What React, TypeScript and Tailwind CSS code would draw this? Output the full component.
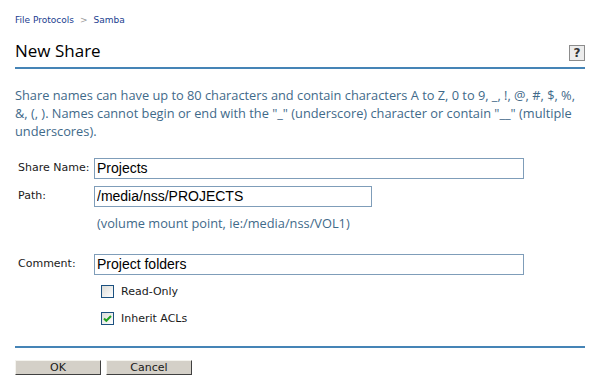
import { useState } from "react";

function Checkbox({ checked, label, onToggle }: { checked: boolean; label: string; onToggle: () => void }) {
  return (
    <label className="flex items-center gap-[7px] h-[13px] cursor-pointer" onClick={onToggle}>
      <span className="w-[13px] h-[13px] border border-[#1c5180] bg-gradient-to-br from-[#dcdcd7] to-[#ffffff] flex items-center justify-center">
        {checked && (
          <svg width="9" height="9" viewBox="0 0 9 9">
            <path d="M1 4.5 L3.3 6.8 L8 2" stroke="#21a121" strokeWidth="2" fill="none" />
          </svg>
        )}
      </span>
      <span className="text-[11px] leading-[13px] text-[#1a1a1a]">{label}</span>
    </label>
  );
}

export default function App() {
  const [shareName, setShareName] = useState("Projects");
  const [path, setPath] = useState("/media/nss/PROJECTS");
  const [comment, setComment] = useState("Project folders");
  const [readOnly, setReadOnly] = useState(false);
  const [inheritAcls, setInheritAcls] = useState(true);

  const inputClass =
    "h-[21px] border border-[#7f9db9] px-[2px] text-[14px] text-black outline-none font-['Liberation_Sans',Arial,sans-serif]";

  return (
    <div className="w-[600px] h-[389px] bg-white px-[15px] pt-[13px] font-['DejaVu_Sans',Verdana,sans-serif]">
      {/* breadcrumb */}
      <div className="text-[9px] leading-[14px] text-[#1a3d8f] flex gap-[6px]">
        <a href="#">File Protocols</a>
        <span className="text-[#9a9a9a]">&gt;</span>
        <a href="#">Samba</a>
      </div>

      {/* title */}
      <div className="mt-[14px] flex items-end justify-between border-b-2 border-[#4584b6] pb-[6px]">
        <h1 className="text-[17px] leading-[20px] text-black font-['Open_Sans',sans-serif]">New Share</h1>
        <button className="w-[16px] h-[16px] border border-[#8c8c8c] bg-[#ececec] flex items-center justify-center text-[12px] font-bold text-[#333] leading-none">
          ?
        </button>
      </div>

      {/* description */}
      <p className="mt-[17px] text-[12.8px] leading-[18px] text-[#3f6a8a] font-['Open_Sans',sans-serif]">
        Share names can have up to 80 characters and contain characters A to Z, 0 to 9, _, !, @, #, $, %,
        &amp;, (, ). Names cannot begin or end with the "_" (underscore) character or contain "__" (multiple
        underscores).
      </p>

      {/* form */}
      <div className="mt-[18px] flex flex-col">
        <div className="flex items-center">
          <span className="w-[79px] pl-[3px] text-[11px] text-[#1a1a1a]">Share Name:</span>
          <input className={`${inputClass} w-[430px]`} value={shareName} onChange={(e) => setShareName(e.target.value)} />
        </div>
        <div className="mt-[7px] flex items-center">
          <span className="w-[79px] pl-[3px] text-[11px] text-[#1a1a1a]">Path:</span>
          <input className={`${inputClass} w-[278px]`} value={path} onChange={(e) => setPath(e.target.value)} />
        </div>
        <div className="mt-[7px] pl-[82px] text-[12.8px] leading-[18px] text-[#3f6a8a] font-['Open_Sans',sans-serif]">
          (volume mount point, ie:/media/nss/VOL1)
        </div>
        <div className="mt-[22px] flex items-center">
          <span className="w-[79px] pl-[3px] text-[11px] text-[#1a1a1a]">Comment:</span>
          <input
            autoFocus
            className={`${inputClass} w-[430px] caret-black`}
            value={comment}
            onChange={(e) => setComment(e.target.value)}
          />
        </div>
        <div className="mt-[10px] pl-[86px] flex flex-col gap-[14px]">
          <Checkbox checked={readOnly} label="Read-Only" onToggle={() => setReadOnly(!readOnly)} />
          <Checkbox checked={inheritAcls} label="Inherit ACLs" onToggle={() => setInheritAcls(!inheritAcls)} />
        </div>
      </div>

      {/* footer */}
      <div className="mt-[21px] border-t-2 border-[#4584b6] pt-[12px] flex gap-[5px]">
        <button className="w-[86px] h-[15px] bg-[#d4d0c8] border-t border-l border-t-[#f4f3ee] border-l-[#f4f3ee] border-b border-r border-b-[#404040] border-r-[#404040] text-[11px] leading-none text-[#1a1a1a]">
          OK
        </button>
        <button className="w-[86px] h-[15px] bg-[#d4d0c8] border-t border-l border-t-[#f4f3ee] border-l-[#f4f3ee] border-b border-r border-b-[#404040] border-r-[#404040] text-[11px] leading-none text-[#1a1a1a]">
          Cancel
        </button>
      </div>
    </div>
  );
}
